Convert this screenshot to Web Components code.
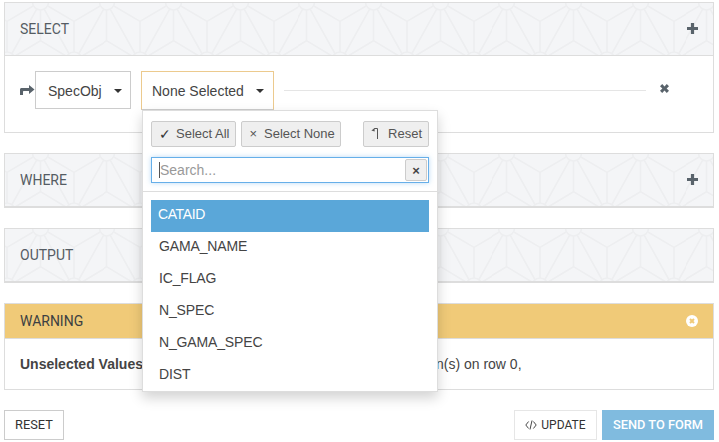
<!DOCTYPE html>
<html>
<head>
<meta charset="utf-8">
<title>Query builder</title>
<style>
  body { margin: 0; padding: 2px 5px 0 4px; font-family: "Liberation Sans", Arial, sans-serif; font-size: 14px; color: #444; background: #fff; }
  qb-panel { margin-bottom: 20px; }
</style>
</head>
<body>

<template id="qb-panel-tpl">
  <style>
    :host { display: block; border: 1px solid #ddd; background: #fff; }
    header {
      display: flex; align-items: center; justify-content: space-between;
      height: 52px; padding: 0 15px; border-bottom: 1px solid #ddd;
      font: 14px Roboto, sans-serif; color: #555c63;
      background-color: #f4f5f7;
      background-image: url("data:image/svg+xml,%3Csvg xmlns='http://www.w3.org/2000/svg' width='66.67' height='115.47' viewBox='0 0 66.67 115.47'%3E%3Cg fill='none' stroke='%23edeef0' stroke-width='1.6'%3E%3Cpath d='M33.33 8V38.5L6 55M33.33 38.5L60.67 55M37 7L62 52M29.5 7L4.5 52M0 19.25V50M0 19.25L26 4M66.67 19.25V50M66.67 19.25L40.67 4'/%3E%3Ccircle cx='33.33' cy='0' r='8'/%3E%3Ccircle cx='0' cy='57.74' r='8'/%3E%3Ccircle cx='66.67' cy='57.74' r='8'/%3E%3C/g%3E%3C/svg%3E");
      background-size: 66.67px 115.47px;
      background-position: 2px -1px;
    }
    :host([tone="warning"]) header { height: 34px; background: #f0ca78; color: #3c3f42; }
  </style>
  <header><span><slot name="title"></slot></span><slot name="action"></slot></header>
  <div class="body"><slot></slot></div>
</template>

<script>
class QbPanel extends HTMLElement {
  constructor() {
    super();
    this.attachShadow({ mode: "open" });
    this.shadowRoot.appendChild(document.getElementById("qb-panel-tpl").content.cloneNode(true));
  }
}
customElements.define("qb-panel", QbPanel);

class QbIcon extends HTMLElement {
  constructor() {
    super();
    this.attachShadow({ mode: "open" });
  }

  static get paths() {
    return {
      plus: `<path d="M3.9 0h3.2v3.9H11v3.2H7.1V11H3.9V7.1H0V3.9h3.9z" fill="currentColor"/>`,
      remove: `<path d="M2.2 0l2.3 2.4L6.8 0 9 2.2 6.6 4.5 9 6.8 6.8 9 4.5 6.6 2.2 9 0 6.8l2.4-2.3L0 2.2z" fill="currentColor"/>`,
      share: `<path d="M0 10V4.6C0 3.6.6 3 1.6 3H9V0l5.5 4.5L9 9V6H4C3.3 6 3 6.3 3 7v3z" fill="currentColor"/>`,
      circle: `<circle cx="6" cy="6" r="6" fill="#fff"/><path d="M4 4l4 4M8 4L4 8" stroke="#f0ca78" stroke-width="2"/>`,
      undo: `<path d="M6.5 11V.5H3.2" fill="none" stroke="currentColor"/><path d="M3.6 0L.4 2.6l3.2.9z" fill="currentColor"/>`,
      code: `<path d="M3.6 1.5L.8 5l2.8 3.5M8.4 1.5L11.2 5 8.4 8.5M7 .5L5 9.5" fill="none" stroke="currentColor" stroke-width=".9"/>`,
    };
  }

  connectedCallback() {
    const w = this.getAttribute("w") || 11;
    const h = this.getAttribute("h") || 11;
    const name = this.getAttribute("name");
    this.shadowRoot.innerHTML = /*html*/ `
      <style>:host { display: inline-flex; color: inherit; flex: none; } svg { display: block; }</style>
      <svg width="${w}" height="${h}" viewBox="0 0 ${w} ${h}">${QbIcon.paths[name]}</svg>`;
  }
}
customElements.define("qb-icon", QbIcon);

/* Boton de desplegable, con su caret */
class QbSelect extends HTMLElement {
  constructor() {
    super();
    this.attachShadow({ mode: "open" });
  }

  connectedCallback() {
    this.shadowRoot.innerHTML = /*html*/ `
      <style>
        :host { display: block; position: relative; }
        .toggle {
          display: flex; align-items: center; box-sizing: border-box; height: 38px;
          padding: 1px 8px 0 12px; border: 1px solid #ccc; background: #fff;
          font: 14px "Liberation Sans", sans-serif; color: #444;
        }
        :host([open]) .toggle { height: 39px; padding: 1px 9px 0 10px; border-color: #ecca8e; border-bottom-color: #ccc; }
        .caret { margin-left: auto; border-top: 4px solid #333; border-left: 4px solid transparent; border-right: 4px solid transparent; }
      </style>
      <div class="toggle"><slot name="label"></slot><span class="caret"></span></div>
      <slot name="menu"></slot>`;
  }
}
customElements.define("qb-select", QbSelect);

class QbMenu extends HTMLElement {
  constructor() {
    super();
    this.attachShadow({ mode: "open" });
  }

  static get styles() {
    return /*css*/ `
      :host {
        display: block; position: absolute; z-index: 10; left: 1px; top: 39px;
        box-sizing: border-box; width: 296px; height: 282px;
        background: #fff; border: 1px solid #ddd;
        box-shadow: 0 6px 12px rgba(0,0,0,.175);
        font: 14px "Liberation Sans", sans-serif; color: #444;
      }
      .tools { display: flex; gap: 4.5px; padding: 10px 8px 0; }
      .tools button {
        display: flex; align-items: center; box-sizing: border-box; height: 26px; padding: 0 5px 1px 7px;
        border: 1px solid #ccc; border-radius: 2px; background: #efefef;
        font: 13px "Liberation Sans", sans-serif; color: #555;
      }
      .tools button:first-child { padding-right: 6px; }
      .tools .reset { margin-left: auto; padding: 0 6px 1px 7px; }
      .tools .reset qb-icon { margin-right: 9px; }
      .check { width: 8px; margin-right: 9px; color: #333; font-size: 14px; }
      .cross { width: 6px; margin-right: 8.5px; margin-left: .5px; }
      .search {
        display: flex; align-items: center; justify-content: space-between; box-sizing: border-box;
        height: 26px; margin: 10px 8px 0; padding: 0 1px 0 7px;
        border: 1px solid #66afe9; box-shadow: 0 0 5px rgba(102,175,233,.45);
        font-size: 14px; color: #999;
      }
      .search span.ph { border-left: 1px solid #555; }
      .search b {
        display: flex; align-items: center; justify-content: center; width: 22px; height: 22px; box-sizing: border-box;
        border: 1px solid #ccc; border-radius: 2px; background: #efefef; font-weight: bold; font-size: 13px; color: #444;
      }
      hr { border: 0; border-top: 1px solid #ddd; margin: 8px 0 8px; }
      .items { padding: 0 8px; }
    `;
  }

  connectedCallback() {
    this.shadowRoot.innerHTML = /*html*/ `
      <style>${QbMenu.styles}</style>
      <div class="tools">
        <button><span class="check">✓</span>Select All</button>
        <button><span class="cross">×</span>Select None</button>
        <button class="reset"><qb-icon name="undo" w="8" h="11"></qb-icon>Reset</button>
      </div>
      <div class="search"><span class="ph">Search...</span><b>×</b></div>
      <hr>
      <div class="items"><slot></slot></div>`;
  }
}
customElements.define("qb-menu", QbMenu);

class QbOption extends HTMLElement {
  constructor() {
    super();
    this.attachShadow({ mode: "open" });
  }

  connectedCallback() {
    this.shadowRoot.innerHTML = /*html*/ `
      <style>
        :host { display: flex; align-items: center; box-sizing: border-box; height: 32px; padding: 0 8px 4px; color: #444; font-size: 14px; letter-spacing: -.15px; }
        :host([active]) { background: #5aa7d9; color: #fff; padding-left: 7px; letter-spacing: -.4px; }
      </style>
      <slot></slot>`;
  }
}
customElements.define("qb-option", QbOption);

class QbButton extends HTMLElement {
  constructor() {
    super();
    this.attachShadow({ mode: "open" });
  }

  connectedCallback() {
    this.shadowRoot.innerHTML = /*html*/ `
      <style>
        :host {
          display: inline-flex; align-items: center; justify-content: center; gap: 4px; box-sizing: border-box;
          height: 30px; padding: 0 10px 1px; border: 1px solid #ccc; background: #fff;
          font: 12.8px Roboto, sans-serif; color: #333;
        }
        :host([tone="light"]) { border-color: #e6e6e6; font-size: 12px; padding: 0 10.5px 1px; }
        :host([tone="primary"]) { border-color: #80bbdf; background: #80bbdf; color: #fff; font-weight: 500; }
      </style>
      <slot></slot>`;
  }
}
customElements.define("qb-button", QbButton);

class QbFooter extends HTMLElement {
  constructor() {
    super();
    this.attachShadow({ mode: "open" });
    this.shadowRoot.innerHTML = /*html*/ `
      <style>
        :host { display: flex; gap: 5px; }
        .left { margin-right: auto; display: flex; }
      </style>
      <div class="left"><slot name="left"></slot></div>
      <slot></slot>`;
  }
}
customElements.define("qb-footer", QbFooter);

class QbRow extends HTMLElement {
  constructor() {
    super();
    this.attachShadow({ mode: "open" });
    this.shadowRoot.innerHTML = /*html*/ `
      <style>
        :host { display: flex; align-items: flex-start; height: 76px; padding: 15px 0 0 15px; box-sizing: border-box; color: #59636b; }
        .arrow { margin-top: 14px; }
        .rule { width: 362px; margin: 19px 0 0 10px; border-top: 1px solid #e5e5e5; }
        .close { margin: 13px 0 0 14px; }
        ::slotted(qb-select:first-of-type) { width: 96px; margin-right: 10px; }
        ::slotted(qb-select:last-of-type) { width: 133px; }
      </style>
      <qb-icon class="arrow" name="share" w="15" h="10"></qb-icon>
      <slot></slot>
      <div class="rule"></div>
      <qb-icon class="close" name="remove" w="9" h="9"></qb-icon>`;
  }
}
customElements.define("qb-row", QbRow);

class QbMessage extends HTMLElement {
  constructor() {
    super();
    this.attachShadow({ mode: "open" });
    this.shadowRoot.innerHTML = /*html*/ `
      <style>
        :host { display: flex; align-items: center; box-sizing: border-box; height: 50px; padding: 0 15px 1px; font: 14px "Liberation Sans", sans-serif; color: #444; }
        .gap { width: 293px; flex: none; }
      </style>
      <slot name="lead"></slot><span class="gap"></span><slot></slot>`;
  }
}
customElements.define("qb-message", QbMessage);
</script>

<qb-panel>
  <span slot="title">SELECT</span>
  <qb-icon slot="action" name="plus" style="color:#59636b;margin-top:-1px"></qb-icon>
  <qb-row>
    <qb-select>
      <span slot="label">SpecObj</span>
    </qb-select>
    <qb-select open>
      <span slot="label">None Selected</span>
      <qb-menu slot="menu">
        <qb-option active>CATAID</qb-option>
        <qb-option>GAMA_NAME</qb-option>
        <qb-option>IC_FLAG</qb-option>
        <qb-option>N_SPEC</qb-option>
        <qb-option>N_GAMA_SPEC</qb-option>
        <qb-option>DIST</qb-option>
      </qb-menu>
    </qb-select>
  </qb-row>
</qb-panel>
<qb-panel>
  <span slot="title">WHERE</span>
  <qb-icon slot="action" name="plus" style="color:#59636b;margin-top:-1px"></qb-icon>
</qb-panel>
<qb-panel>
  <span slot="title">OUTPUT</span>
</qb-panel>
<qb-panel tone="warning">
  <span slot="title">WARNING</span>
  <qb-icon slot="action" name="circle" w="12" h="12"></qb-icon>
  <qb-message><b slot="lead">Unselected Values</b>n(s) on row 0,</qb-message>
</qb-panel>
<qb-footer>
  <qb-button slot="left">RESET</qb-button>
  <qb-button tone="light"><qb-icon name="code" w="12" h="10"></qb-icon>UPDATE</qb-button>
  <qb-button tone="primary">SEND TO FORM</qb-button>
</qb-footer>

</body>
</html>
